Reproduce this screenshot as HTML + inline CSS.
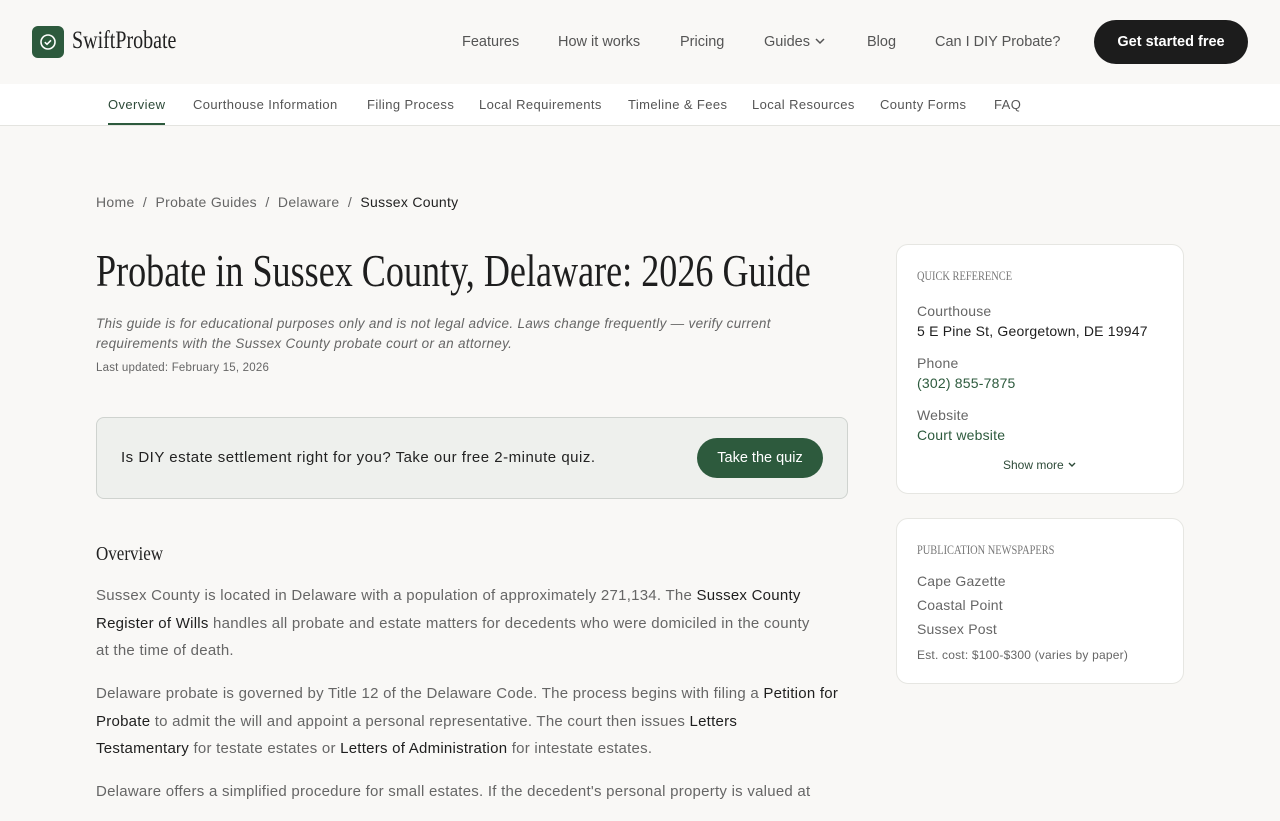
<!DOCTYPE html>
<html><head><meta charset="utf-8"><style>
*{margin:0;padding:0;box-sizing:border-box}
html,body{width:1280px;height:800px;overflow:hidden}
body{background:#f9f8f6;font-family:"Liberation Sans",sans-serif;color:#555}
.top{height:84px;position:relative}
.logo{position:absolute;left:32px;top:26px;width:32px;height:32px;background:#2d5a3d;border-radius:6px}
.brand{position:absolute;left:72px;top:27px;font-family:"Liberation Serif",serif;font-size:25px;color:#222;transform:scaleX(.8);transform-origin:left}
.nav{position:absolute;top:34px;font-size:14.5px;color:#555}
.cta{position:absolute;left:1094px;top:20px;width:154px;height:44px;border-radius:22px;background:#1c1c1c;color:#fff;font-size:14.5px;font-weight:bold;text-align:center;line-height:44px}
.sub{height:42px;background:#fff;border-bottom:1px solid #e4e4e0;position:relative}
.sub span{position:absolute;top:13px;font-size:13px;color:#555;letter-spacing:.4px}
.sub .act{color:#2d4a38;border-bottom:2px solid #2d5a3d;padding-bottom:11px}
.crumb{position:absolute;top:194px;left:96px;font-size:14px;color:#666;letter-spacing:.3px}
.crumb b{font-weight:normal;color:#222}
h1{position:absolute;left:96px;top:244px;font-family:"Liberation Serif",serif;font-weight:normal;font-size:46px;color:#1e1e1e;transform:scaleX(.785);transform-origin:left;white-space:nowrap}
.disc{position:absolute;left:96px;top:314px;width:740px;font-size:13.5px;font-style:italic;color:#666;line-height:20px;letter-spacing:.3px}
.upd{position:absolute;left:96px;top:362px;font-size:11.5px;color:#666;letter-spacing:.2px}
.quiz{position:absolute;left:96px;top:417px;width:752px;height:82px;background:#eef0ed;border:1px solid #cfd3cf;border-radius:8px}
.quiz p{position:absolute;left:24px;top:31px;font-size:15px;color:#222;letter-spacing:.5px}
.qb{position:absolute;left:600px;top:20px;width:126px;height:40px;border-radius:20px;background:#2d5a3d;color:#fff;font-size:14.5px;text-align:center;line-height:40px}
h2{position:absolute;left:96px;top:543px;font-family:"Liberation Serif",serif;font-weight:normal;font-size:20px;color:#222;transform:scaleX(.85);transform-origin:left}
.body{position:absolute;left:96px;top:582px;width:780px;font-size:15px;line-height:27.5px;color:#666;letter-spacing:.25px;white-space:nowrap}
.body p{margin-bottom:15.5px}
.body b{font-weight:normal;color:#1e1e1e}
.card{position:absolute;left:896px;width:288px;background:#fff;border:1px solid #e6e6e2;border-radius:12px}
.ch{font-family:"Liberation Serif",serif;font-size:13px;color:#777;position:absolute;left:20px;transform:scaleX(.8);transform-origin:left;white-space:nowrap}
.lab{position:absolute;left:20px;font-size:14px;color:#666;letter-spacing:.2px}
.val{position:absolute;left:20px;font-size:14px;color:#1e1e1e;letter-spacing:.2px}
.g{color:#2d5a3d}
</style></head><body>
<div class="top">
<div class="logo"><svg width="32" height="32"><circle cx="16" cy="16" r="7" fill="none" stroke="#fff" stroke-width="1.6"/><path d="M12.8 16.2l2.2 2.1 4-4" fill="none" stroke="#fff" stroke-width="1.6"/></svg></div>
<div class="brand">SwiftProbate</div>
<span class="nav" style="left:462px">Features</span>
<span class="nav" style="left:558px">How it works</span>
<span class="nav" style="left:680px">Pricing</span>
<span class="nav" style="left:764px">Guides <svg width="12" height="10"><path d="M2 3l4 4 4-4" fill="none" stroke="#555" stroke-width="1.5"/></svg></span>
<span class="nav" style="left:867px">Blog</span>
<span class="nav" style="left:935px">Can I DIY Probate?</span>
<div class="cta">Get started free</div>
</div>
<div class="sub">
<span class="act" style="left:108px">Overview</span>
<span style="left:193px">Courthouse Information</span>
<span style="left:367px">Filing Process</span>
<span style="left:479px">Local Requirements</span>
<span style="left:628px">Timeline &amp; Fees</span>
<span style="left:752px">Local Resources</span>
<span style="left:880px">County Forms</span>
<span style="left:994px">FAQ</span>
</div>
<div class="crumb">Home &nbsp;/&nbsp; Probate Guides &nbsp;/&nbsp; Delaware &nbsp;/&nbsp; <b>Sussex County</b></div>
<h1>Probate in Sussex County, Delaware: 2026 Guide</h1>
<div class="disc">This guide is for educational purposes only and is not legal advice. Laws change frequently — verify current requirements with the Sussex County probate court or an attorney.</div>
<div class="upd">Last updated: February 15, 2026</div>
<div class="quiz"><p>Is DIY estate settlement right for you? Take our free 2-minute quiz.</p><div class="qb">Take the quiz</div></div>
<h2>Overview</h2>
<div class="body">
<p>Sussex County is located in Delaware with a population of approximately 271,134. The <b>Sussex County</b><br><b>Register of Wills</b> handles all probate and estate matters for decedents who were domiciled in the county<br>at the time of death.</p>
<p>Delaware probate is governed by Title 12 of the Delaware Code. The process begins with filing a <b>Petition for</b><br><b>Probate</b> to admit the will and appoint a personal representative. The court then issues <b>Letters</b><br><b>Testamentary</b> for testate estates or <b>Letters of Administration</b> for intestate estates.</p>
<p>Delaware offers a simplified procedure for small estates. If the decedent's personal property is valued at</p>
</div>
<div class="card" style="top:244px;height:250px">
<div class="ch" style="top:23px">QUICK REFERENCE</div>
<div class="lab" style="top:58px">Courthouse</div>
<div class="val" style="top:78px">5 E Pine St, Georgetown, DE 19947</div>
<div class="lab" style="top:110px">Phone</div>
<div class="val g" style="top:130px">(302) 855-7875</div>
<div class="lab" style="top:162px">Website</div>
<div class="val g" style="top:182px">Court website</div>
<div style="position:absolute;left:0;width:100%;top:213px;text-align:center;font-size:12px;color:#2d4a38">Show more <svg width="10" height="8"><path d="M2 2l3 3 3-3" fill="none" stroke="#2d4a38" stroke-width="1.4"/></svg></div>
</div>
<div class="card" style="top:518px;height:166px">
<div class="ch" style="top:23px">PUBLICATION NEWSPAPERS</div>
<div class="lab" style="top:54px">Cape Gazette</div>
<div class="lab" style="top:78px">Coastal Point</div>
<div class="lab" style="top:102px">Sussex Post</div>
<div class="lab" style="top:129px;font-size:12px">Est. cost: $100-$300 (varies by paper)</div>
</div>
</body></html>
